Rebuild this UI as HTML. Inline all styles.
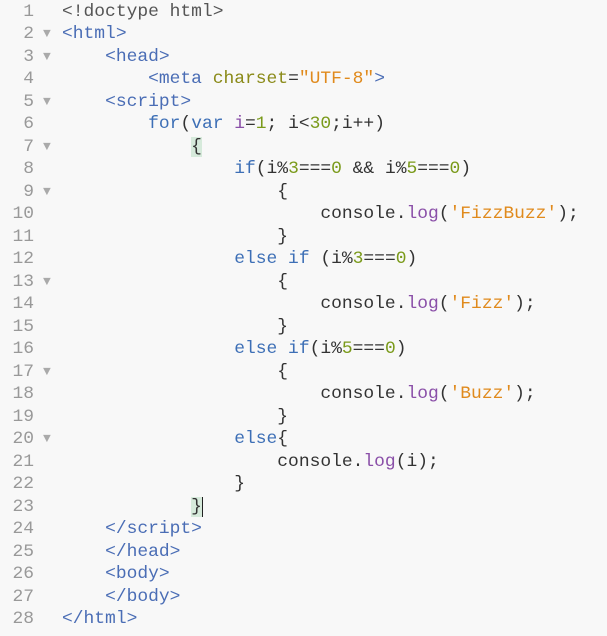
<!DOCTYPE html>
<html><head><meta charset="UTF-8"><style>
html,body{margin:0;padding:0;background:#f8f8f8;width:607px;height:636px;overflow:hidden}
.w{position:absolute;top:1px;left:0;font-family:"Liberation Mono",monospace;font-size:17.95px;line-height:22.48px;color:#333}
.ln{position:absolute;left:0;width:34px;text-align:right;color:#999}
.ar{position:absolute;left:43px;color:#aaa;font-size:13px}
pre{position:absolute;left:62px;top:0;margin:0;font:inherit;white-space:pre}
.t{color:#4a6db5}.a{color:#8a8a18}.s{color:#e08a1c}.k{color:#3d6fb6}.v{color:#8a4fa8}.n{color:#7a9a1a}
.m{background:#d6eadb}
.c{border-right:1.5px solid #222}
</style></head><body><div class="w">
<div class="ln">1<br>2<br>3<br>4<br>5<br>6<br>7<br>8<br>9<br>10<br>11<br>12<br>13<br>14<br>15<br>16<br>17<br>18<br>19<br>20<br>21<br>22<br>23<br>24<br>25<br>26<br>27<br>28</div>
<div class="ar" style="top:0;line-height:22.48px"><br>▼<br>▼<br><br>▼<br><br>▼<br><br>▼<br><br><br><br>▼<br><br><br><br>▼<br><br><br>▼</div>
<pre><span style="color:#555">&lt;!doctype html&gt;</span>
<span class="t">&lt;html&gt;</span>
    <span class="t">&lt;head&gt;</span>
        <span class="t">&lt;meta</span> <span class="a">charset</span>=<span class="s">"UTF-8"</span><span class="t">&gt;</span>
    <span class="t">&lt;script&gt;</span>
        <span class="k">for</span>(<span class="k">var</span> <span class="v">i</span>=<span class="n">1</span>; i&lt;<span class="n">30</span>;i++)
            <span class="m">{</span>
                <span class="k">if</span>(i%<span class="n">3</span>===<span class="n">0</span> &amp;&amp; i%<span class="n">5</span>===<span class="n">0</span>)
                    {
                        console.<span class="v">log</span>(<span class="s">'FizzBuzz'</span>);
                    }
                <span class="k">else if</span> (i%<span class="n">3</span>===<span class="n">0</span>)
                    {
                        console.<span class="v">log</span>(<span class="s">'Fizz'</span>);
                    }
                <span class="k">else if</span>(i%<span class="n">5</span>===<span class="n">0</span>)
                    {
                        console.<span class="v">log</span>(<span class="s">'Buzz'</span>);
                    }
                <span class="k">else</span>{
                    console.<span class="v">log</span>(i);
                }
            <span class="m c">}</span>
    <span class="t">&lt;/script&gt;</span>
    <span class="t">&lt;/head&gt;</span>
    <span class="t">&lt;body&gt;</span>
    <span class="t">&lt;/body&gt;</span>
<span class="t">&lt;/html&gt;</span></pre>
</div></body></html>
